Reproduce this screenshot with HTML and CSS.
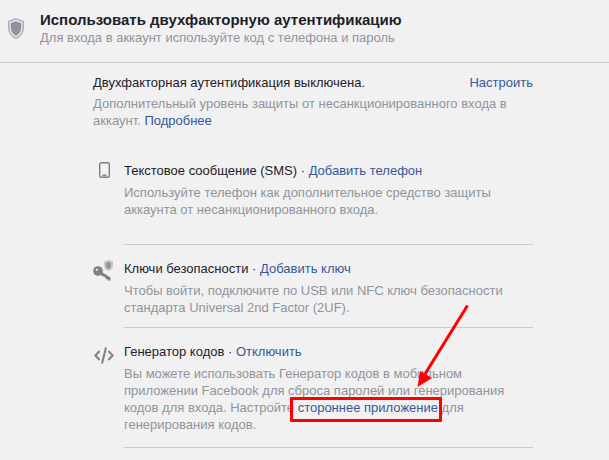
FILE: index.html
```html
<!DOCTYPE html>
<html lang="ru">
<head>
  <meta charset="UTF-8" />
  <title>Двухфакторная аутентификация</title>
  <link rel="stylesheet" href="styles.css">
</head>
<body>
  <div class="header">
    <svg class="shield" width="16" height="21" viewBox="0 0 16 21">
      <path d="M8 .7 15.300 3.500V10c0 4.700-3 8.400-7.300 10.300C3.700 18.400.7 14.700.7 10V3.500Z" fill="#e4e5e7" stroke="#a4a7ad" stroke-width="1.200"/>
      <path d="M8 3.200 13.200 5.100V10c0 3.500-2.100 6.200-5.200 7.800C4.900 16.200 2.800 13.500 2.800 10V5.100Z" fill="#90949c"/>
    </svg>
    <div>
      <div class="title">Использовать двухфакторную аутентификацию</div>
      <div class="subtitle">Для входа в аккаунт используйте код с телефона и пароль</div>
    </div>
  </div>

  <div class="content">
    <div class="status">
      <div class="status-top">
        <span class="dark">Двухфакторная аутентификация выключена.</span>
        <a class="link">Настроить</a>
      </div>
      <p class="muted">Дополнительный уровень защиты от несанкционированного входа в аккаунт. <a class="link">Подробнее</a></p>
    </div>

    <div class="method method-sms">
      <div class="icon">
        <svg width="11" height="16" viewBox="0 0 11 16">
          <rect x=".7" y=".7" width="9.600" height="14.600" rx="1.500" fill="none" stroke="#808080" stroke-width="1.400"/>
          <rect x="3.500" y="12.600" width="4" height="1.600" fill="#808080"/>
        </svg>
      </div>
      <div class="method-body">
        <div class="dark">Текстовое сообщение (SMS) · <a class="link">Добавить телефон</a></div>
        <p class="muted">Используйте телефон как дополнительное средство защиты аккаунта от несанкционированного входа.</p>
      </div>
    </div>

    <div class="method method-keys">
      <div class="icon">
        <svg width="21" height="21" viewBox="0 0 21 21">
          <path d="M15.500 0 20 1.600v4.200c0 2.500-1.800 4.300-4.500 5.400C12.800 10.100 11 8.300 11 5.800V1.600Z" fill="#c6c8cc"/>
          <path d="M15.500 2 18 3v2.800c0 1.500-1 2.700-2.500 3.400C14 8.500 13 7.300 13 5.800V3Z" fill="#90949c"/>
          <circle cx="5" cy="11" r="4.800" fill="#808080"/>
          <path d="M8 11.500 17.500 17.500V20.500H14.500V19H12.500V17.500L5.500 14Z" fill="#808080"/>
          <circle cx="3.800" cy="9.800" r="1.100" fill="#f1f1f1"/>
        </svg>
      </div>
      <div class="method-body">
        <div class="dark">Ключи безопасности · <a class="link">Добавить ключ</a></div>
        <p class="muted">Чтобы войти, подключите по USB или NFC ключ безопасности стандарта Universal 2nd Factor (2UF).</p>
      </div>
    </div>

    <div class="method method-code">
      <div class="icon">
        <svg width="20" height="17" viewBox="0 0 20 17">
          <path d="M5.600 4 1.300 8.500l4.300 4.500M14.400 4 18.700 8.500 14.400 13M12 .6 8 16.400" fill="none" stroke="#808080" stroke-width="2"/>
        </svg>
      </div>
      <div class="method-body">
        <div class="dark">Генератор кодов · <a class="link">Отключить</a></div>
        <p class="muted">Вы можете использовать Генератор кодов в мобильном приложении Facebook для сброса паролей или генерирования кодов для входа. Настройте <a class="link boxed">стороннее приложение</a> для генерирования кодов.</p>
      </div>
    </div>
  </div>

  <svg class="arrow" width="609" height="460" viewBox="0 0 609 460">
    <path d="M467.500 305.500 425 374" stroke="#ff0000" stroke-width="3" fill="none"/>
    <path d="M417.500 387 420 371 432 378Z" fill="#ff0000"/>
  </svg>
</body>
</html>
```

FILE: styles.css
```css
html, body {
  margin: 0;
  height: 460px;
  overflow: hidden;
}

body {
  position: relative;
  background: #f1f1f1;
  font-family: "Liberation Sans", Arial, sans-serif;
  font-size: 13px;
  line-height: 17px;
}

p { margin: 0; }

.header {
  display: flex;
  align-items: flex-start;
  gap: 16px;
  height: 52px;
  padding: 10px 0 0 8px;
  border-bottom: 1px solid #cccccc;
}

.shield { margin-top: 8px; }

.title {
  font-size: 15px;
  font-weight: bold;
  line-height: 19px;
  color: #1d2129;
}

.subtitle {
  color: #90949c;
  line-height: 17px;
}

.content {
  margin-left: 93px;
  width: 440px;
}

.status {
  padding-top: 11px;
  padding-bottom: 18px;
}

.status-top {
  display: flex;
  justify-content: space-between;
  margin-bottom: 4px;
}

.dark { color: #1d2129; }
.muted { color: #90949c; }
.link { color: #365899; }

.method {
  display: flex;
  margin-left: -93px;
  padding-left: 93px;
}

.icon {
  flex: none;
  display: flex;
  justify-content: flex-start;
}

.method-body {
  flex: 1;
  border-bottom: 1px solid #cccccc;
}

.method-body .dark { margin-bottom: 5px; }
.method-body .muted { width: 385px; }

.method-sms .method-body { padding: 15px 0 26px; }
.method-sms .icon { padding: 15px 0 0 6px; width: 25px; }

.method-keys .method-body { padding: 15px 0 11px; }
.method-keys .icon { padding-top: 15px; width: 31px; }

.method-code .method-body { padding: 15px 0 14px; }
.method-code .icon { padding: 19px 0 0 1px; width: 30px; }

.boxed { position: relative; }

.boxed::after {
  content: "";
  position: absolute;
  left: -8px;
  right: -4px;
  top: -3px;
  bottom: -7px;
  border: 3px solid #ff0000;
  border-radius: 1px;
}

.arrow {
  position: absolute;
  left: 0;
  top: 0;
  pointer-events: none;
}
```
